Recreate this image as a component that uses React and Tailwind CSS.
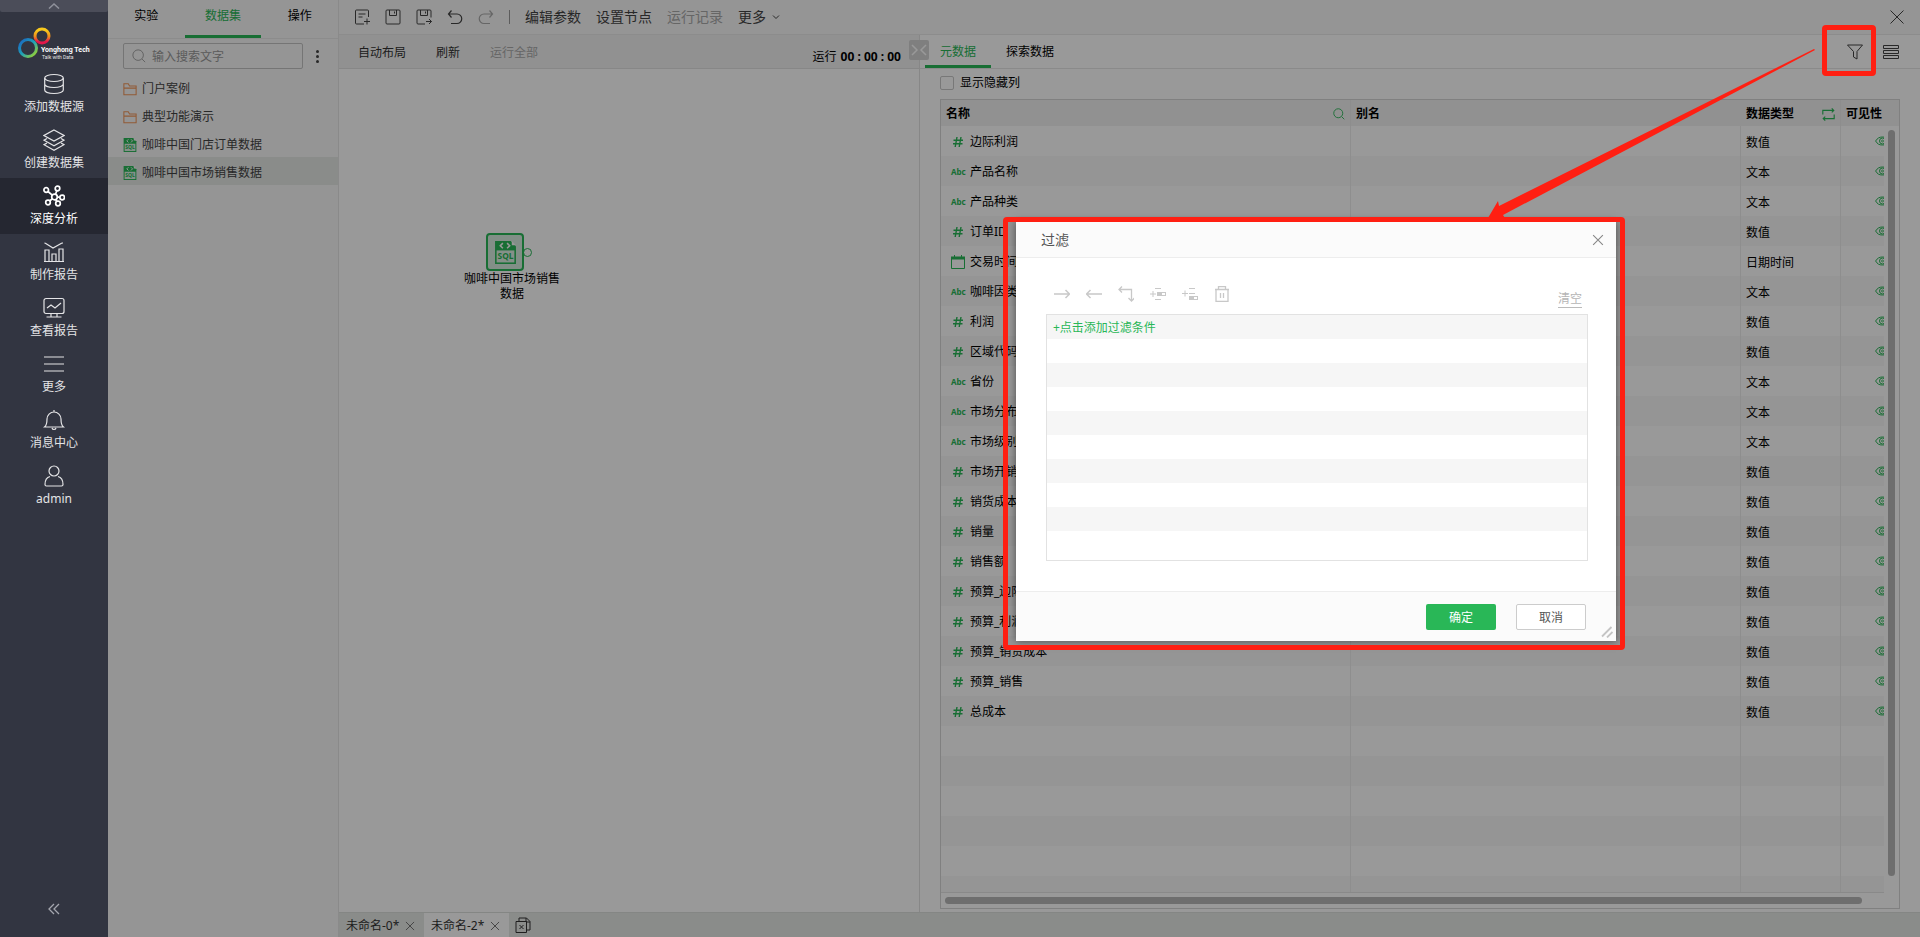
import React from "react";
import clsx from "clsx";

const menu = [
  { icon: "database", label: "添加数据源" },
  { icon: "layers", label: "创建数据集" },
  { icon: "nodes", label: "深度分析", active: true },
  { icon: "chart", label: "制作报告" },
  { icon: "monitor", label: "查看报告" },
  { icon: "menu", label: "更多" },
  { icon: "bell", label: "消息中心" },
  { icon: "user", label: "admin" },
];

const files = [
  { type: "folder", name: "门户案例" },
  { type: "folder", name: "典型功能演示" },
  { type: "sql", name: "咖啡中国门店订单数据" },
  { type: "sql", name: "咖啡中国市场销售数据", active: true },
];

const columns = [
  { name: "边际利润", type: "数值" },
  { name: "产品名称", type: "文本" },
  { name: "产品种类", type: "文本" },
  { name: "订单ID", type: "数值" },
  { name: "交易时间", type: "日期时间" },
  { name: "咖啡因类型", type: "文本" },
  { name: "利润", type: "数值" },
  { name: "区域代码", type: "数值" },
  { name: "省份", type: "文本" },
  { name: "市场分布", type: "文本" },
  { name: "市场级别", type: "文本" },
  { name: "市场开销", type: "数值" },
  { name: "销货成本", type: "数值" },
  { name: "销量", type: "数值" },
  { name: "销售额", type: "数值" },
  { name: "预算_边际利润", type: "数值" },
  { name: "预算_利润", type: "数值" },
  { name: "预算_销货成本", type: "数值" },
  { name: "预算_销售", type: "数值" },
  { name: "总成本", type: "数值" },
];

const emptyRows = [0, 1, 2, 3, 4, 5];
const filterRows = [0, 1, 2, 3, 4, 5, 6, 7, 8];

const menuIcons = {
  database: (
    <>
      <ellipse cx="11" cy="5" rx="9.3" ry="3.5" />
      <path d="M1.7 5v12c0 2 4 3.5 9.3 3.5s9.300-1.500 9.300-3.500V5M1.700 11c0 2 4 3.500 9.300 3.500s9.300-1.500 9.300-3.500" />
    </>
  ),
  layers: (
    <path d="M11 1l10 5.500-10 5.500L1 6.500zM4 9.500l-3 1.700 10 5.500 10-5.500-3-1.700M4 14l-3 1.700 10 5.500 10-5.500-3-1.700" />
  ),
  nodes: (
    <g strokeWidth="1.700">
      <circle cx="11.500" cy="12" r="2.800" />
      <circle cx="3.200" cy="5" r="2.300" />
      <circle cx="14.500" cy="3.500" r="2.300" />
      <circle cx="19.200" cy="12.500" r="2.300" />
      <circle cx="5" cy="17.500" r="2.300" />
      <circle cx="15" cy="18.500" r="2.300" />
      <path d="M5 6.500l4.500 3.800M13.800 5.800l-1.300 3.500M14.300 12.200h2.500M6.500 16l3-2.200M14 16.500l-1.300-2" />
    </g>
  ),
  chart: (
    <path d="M1 20.500h20M2 20V9h4v11M9 20v-7h4v7M16 20V8h4v12M2 2l8 5 9-5M2.500 2.200h-1M20 2h-1" />
  ),
  monitor: (
    <path d="M3 1.500h16a2 2 0 0 1 2 2v11a2 2 0 0 1-2 2H3a2 2 0 0 1-2-2v-11a2 2 0 0 1 2-2zM8 16.500v3.500M14 16.500v3.500M3.500 20h15M4 11l4-3 4 3 6-5" />
  ),
  menu: <path d="M1 4h20M1 11h20M1 18h20" />,
  bell: (
    <path d="M11 1v2M1.500 18c2-1.500 2.500-4 2.500-8a7 7 0 0 1 14 0c0 4 .500 6.500 2.500 8zM9 19c.500 2 3.500 2 4 0" />
  ),
  user: (
    <>
      <circle cx="11" cy="6" r="5" />
      <path d="M7 11.500c-3 .800-5 3.500-5 8 0 1 .500 1.500 1.500 1.500h15c1 0 1.500-.500 1.500-1.500 0-4.500-2-7.200-5-8" />
    </>
  ),
};

const Icon = ({ className, size = 16, viewBox = "0 0 16 16", width, children }) => (
  <svg
    className={clsx("shrink-0", className)}
    width={size}
    height={size}
    viewBox={viewBox}
    fill="none"
    stroke="currentColor"
    strokeWidth={width || 1}
  >
    {children}
  </svg>
);

const CloseIcon = ({ className, size = 16, width }) => (
  <Icon className={className} size={size} width={width}>
    <path d="M1.500 1.500l13 13M14.500 1.500l-13 13" />
  </Icon>
);

const FolderIcon = () => (
  <Icon size={14} className="text-[#f2965a]" width={1.2}>
    <path d="M1 14.500V2h5l1.500 2.500H15v10zM1 7h14" />
  </Icon>
);

const SqlIcon = ({ size = 14 }) => (
  <svg className="shrink-0" width={size} height={size} viewBox="0 0 20 22" fill="none">
    <path d="M0 0h15l5 5v17H0z" fill="#29b757" />
    <path d="M1.500 9h17v11.500h-17z" fill="#dff1e5" />
    <path d="M7.500 2L5 4.500 7.500 7M11.500 2L14 4.500 11.500 7" stroke="#fff" strokeWidth="1.500" />
    <path d="M16 0v4h4z" fill="#fff" />
    <text x="10" y="17.500" textAnchor="middle" fontSize="8" fontWeight="700" fill="#29b757">
      SQL
    </text>
  </svg>
);

const TypeIcon = ({ type }) => {
  if (type === "文本") return <span className="w-[14px] text-[8px] leading-3 font-bold text-[#29b757]">Abc</span>;
  if (type === "日期时间")
    return (
      <Icon size={14} className="text-[#29b757]" viewBox="0 0 14 14">
        <path d="M.5 2.500h13v11H.5z" />
        <path d="M0 1.500h14v3H0z" fill="currentColor" stroke="none" />
        <path d="M3.500 0v3M10.500 0v3" />
      </Icon>
    );
  return (
    <Icon size={14} className="text-[#29b757]" viewBox="0 0 14 14" width={1.4}>
      <path d="M6 2L4.200 12M10 2L8.200 12M2.500 5.200h9.500M2 8.800h9.500" />
    </Icon>
  );
};

const EyeIcon = () => (
  <svg className="shrink-0 text-[#29b757]" width="16" height="10" viewBox="0 0 16 10" fill="none" stroke="currentColor">
    <path d="M.6 5C2.500 2 4.500 1 7.500 1s5.500 1 7.400 4C13 8 11 9 7.500 9S2.500 8 .6 5z" />
    <circle cx="7.500" cy="5" r="3" />
    <circle cx="7.500" cy="5" r="1" strokeWidth=".8" />
  </svg>
);

const Logo = () => (
  <svg width="76" height="36" viewBox="0 0 76 36" fill="none">
    <defs>
      <linearGradient id="warm" x1="0" y1="0" x2="0" y2="1">
        <stop offset="0.1" stopColor="#f8c81c" />
        <stop offset="0.55" stopColor="#f08a1d" />
        <stop offset="0.9" stopColor="#e2174b" />
      </linearGradient>
      <linearGradient id="cool" x1="0" y1="0" x2="1" y2="1">
        <stop offset="0.1" stopColor="#1b6fc0" />
        <stop offset="0.5" stopColor="#1fa3b8" />
        <stop offset="0.9" stopColor="#8fce3c" />
      </linearGradient>
    </defs>
    <circle cx="25" cy="10" r="7" stroke="url(#warm)" strokeWidth="3" />
    <circle cx="11" cy="22" r="8.500" stroke="url(#cool)" strokeWidth="3" />
    <text x="24" y="26" fontSize="7" fontWeight="700" fill="#fff" fontFamily="Roboto, sans-serif">
      Yonghong Tech
    </text>
    <text x="25" y="33" fontSize="5" fill="#e5e5e5" fontFamily="Roboto, sans-serif">
      Talk with Data
    </text>
  </svg>
);

const Sidebar = () => (
  <aside className="flex w-[108px] shrink-0 flex-col bg-[#323541] text-[#e4e4e6]">
    <button className="flex h-3 items-center justify-center rounded-b-xs bg-[#4b4d59] text-[#8f919b]" aria-label="收起顶部">
      <svg width="12" height="6" viewBox="0 0 12 6" fill="none" stroke="currentColor" strokeWidth="1.500">
        <path d="M1 5.500l5-4.500 5 4.500" />
      </svg>
    </button>
    <div className="flex h-[54px] items-start pt-[14px] pl-[17px]">
      <Logo />
    </div>
    <nav className="flex flex-col">
      {menu.map((el) => (
        <a
          key={el.label}
          href="#"
          className={clsx(
            "flex h-14 flex-col items-center gap-1 pt-[7px] text-xs",
            el.active && "bg-[#252731] text-white"
          )}
        >
          <Icon size={22} viewBox="0 0 22 22" width={1.2}>
            {menuIcons[el.icon]}
          </Icon>
          <span>{el.label}</span>
        </a>
      ))}
    </nav>
    <button className="mt-auto mb-[22px] flex justify-center text-[#a4a6ae]" aria-label="收起菜单">
      <svg width="12" height="12" viewBox="0 0 12 12" fill="none" stroke="currentColor" strokeWidth="1.300">
        <path d="M6 1L1 6l5 5M11 1L6 6l5 5" />
      </svg>
    </button>
  </aside>
);

const DataPanel = () => (
  <section className="flex w-[231px] shrink-0 flex-col border-r border-[#e6e6e6] bg-[#f8f8f8] text-xs">
    <div className="flex h-[39px] border-b border-[#e9e9e9]">
      <button className="flex-1 border-b-3 border-transparent pb-[3px]">实验</button>
      <button className="flex-1 border-b-3 border-[#29b757] pb-[3px] text-[#29b757]">数据集</button>
      <button className="flex-1 border-b-3 border-transparent pb-[3px]">操作</button>
    </div>
    <div className="flex items-center gap-[11px] py-1 pr-[18px] pl-[15px]">
      <label className="flex h-[26px] min-w-0 flex-1 items-center gap-[6px] rounded-xs border border-[#c4c4c4] px-2">
        <Icon size={14} className="text-[#999]">
          <circle cx="7" cy="7" r="6" />
          <path d="M11.500 11.500l3.500 3.500" />
        </Icon>
        <input
          type="text"
          placeholder="输入搜索文字"
          aria-label="输入搜索文字"
          className="min-w-0 flex-1 pt-[2px] outline-none placeholder:text-[#999]"
        />
      </label>
      <button aria-label="更多操作" className="flex w-[6px] flex-col items-center gap-[2px]">
        <span className="size-[3px] rounded-full bg-[#444]" />
        <span className="size-[3px] rounded-full bg-[#444]" />
        <span className="size-[3px] rounded-full bg-[#444]" />
      </button>
    </div>
    <ul>
      {files.map((el) => (
        <li
          key={el.name}
          className={clsx("flex h-7 items-center gap-[5px] pt-[3px] pl-[15px] text-[#444]", el.active && "bg-[#e6e9e7]")}
        >
          {el.type === "folder" ? <FolderIcon /> : <SqlIcon />}
          <span>{el.name}</span>
        </li>
      ))}
    </ul>
  </section>
);

const TopBar = () => (
  <header className="flex h-[35px] shrink-0 items-center gap-[15px] border-b border-[#eaeaea] bg-[#f8f8f8] px-[15px] text-sm text-[#444]">
    <button aria-label="新建">
      <Icon>
        <path d="M14.500 8V2a1 1 0 0 0-1-1h-11a1 1 0 0 0-1 1v12a1 1 0 0 0 1 1H10M4.500 5h7M4.500 8h4M13 9.500v6M10 12.500h6" />
      </Icon>
    </button>
    <button aria-label="保存">
      <Icon>
        <path d="M2 1h12a1 1 0 0 1 1 1v12a1 1 0 0 1-1 1H2a1 1 0 0 1-1-1V2a1 1 0 0 1 1-1zM4.500 1v5.500h7V1M9.500 2.500v2" />
      </Icon>
    </button>
    <button aria-label="另存为">
      <Icon>
        <path d="M15 8.500V2a1 1 0 0 0-1-1H2a1 1 0 0 0-1 1v12a1 1 0 0 0 1 1h7M4.500 1v5.500h7V1M9.500 2.500v2M10 12.500h5.500M13 10l2.500 2.500L13 15" />
      </Icon>
    </button>
    <button aria-label="撤销">
      <Icon width={1.200}>
        <path d="M4.500 1.500L1.500 5l3 3.500M1.500 5h8.500a4.700 4.700 0 0 1 0 9.500H4" />
      </Icon>
    </button>
    <button aria-label="重做" className="text-[#aaa]">
      <Icon width={1.200}>
        <path d="M11.500 1.500l3 3.500-3 3.500M14.500 5H6a4.700 4.700 0 0 0 0 9.500h6" />
      </Icon>
    </button>
    <span className="h-[14px] w-px bg-[#999]" />
    <button>编辑参数</button>
    <button>设置节点</button>
    <button className="text-[#aaa]">运行记录</button>
    <button className="flex items-center gap-[6px]">
      更多
      <Icon size={8} viewBox="0 0 8 8">
        <path d="M1 2.500l3 3 3-3" />
      </Icon>
    </button>
    <button aria-label="关闭" className="ml-auto">
      <CloseIcon />
    </button>
  </header>
);

const Canvas = () => (
  <section className="relative flex w-[581px] shrink-0 flex-col border-r border-[#e2e2e2] bg-white text-xs">
    <div className="flex h-[34px] items-center gap-[30px] border-b border-[#e2e2e2] bg-[#f2f2f2] pt-[2px] pr-[18px] pl-[19px] text-[#333]">
      <button>自动布局</button>
      <button>刷新</button>
      <button className="text-[#aaa]">运行全部</button>
      <span className="ml-auto flex gap-1 pt-2 text-black">
        运行 <b>00 : 00 : 00</b>
      </span>
    </div>
    <div className="relative flex-1">
      <div className="absolute top-[164px] left-[121px] flex w-[104px] flex-col items-center">
        <div className="flex items-center pr-[6px]">
          <span className="flex size-[38px] items-center justify-center rounded-sm border-2 border-[#29b757] bg-[#d9efe1]">
            <SqlIcon size={23} />
          </span>
          <span className="-ml-px size-[9px] rounded-full border border-[#29b757]" />
        </div>
        <p className="text-center leading-[15px]">咖啡中国市场销售数据</p>
      </div>
    </div>
    <button
      aria-label="折叠面板"
      className="absolute top-[5px] -right-[10px] z-10 flex size-5 items-center justify-center rounded-xs bg-[#d4d4d4] text-white"
    >
      <Icon width={1.500}>
        <path d="M1 3l5 5-5 5M15 3l-5 5 5 5" />
      </Icon>
    </button>
  </section>
);

const MetaTable = () => (
  <div className="mr-5 ml-5 flex min-h-0 flex-1 flex-col border border-[#d6d6d6]">
    <div className="relative min-h-0 flex-1 overflow-hidden">
      <div className="absolute inset-0 overflow-hidden">
        <table className="w-full table-fixed border-separate border-spacing-0 text-left">
          <colgroup>
            <col className="w-[410px]" />
            <col />
            <col className="w-[100px]" />
            <col className="w-[43px]" />
            <col className="w-[15px]" />
          </colgroup>
          <thead>
            <tr className="h-[26px] bg-[#f2f2f2]">
              <th className="border-r border-[#ebebeb] px-[5px] pt-[2px] pb-0">
                <span className="flex items-center justify-between">
                  名称
                  <Icon size={12} className="text-[#29b757]" width={1.200}>
                    <circle cx="7" cy="7" r="6" />
                    <path d="M11.500 11.500l3.500 3.500" />
                  </Icon>
                </span>
              </th>
              <th className="px-[5px] pt-[2px] pb-0">别名</th>
              <th className="border-r border-[#ebebeb] px-[5px] pt-[2px] pb-0">
                <span className="flex items-center justify-between">
                  数据类型
                  <Icon size={13} className="text-[#29b757]" width={1.400}>
                    <path d="M1 8V3h13M12 .5L14.500 3 12 5.500M15 8v5H2M4 10.500L1.500 13 4 15.500" />
                  </Icon>
                </span>
              </th>
              <th colSpan={2} className="px-[5px] pt-[2px] pb-0">
                可见性
              </th>
            </tr>
          </thead>
          <tbody>
            {columns.map((el) => (
              <tr key={el.name} className="group h-[30px]">
                <td className="border-r border-[#ededed] px-0 pt-[2px] pb-0 group-even:bg-[#f8f8f8]">
                  <span className="flex items-center gap-[5px] pl-[10px]">
                    <TypeIcon type={el.type} />
                    {el.name}
                  </span>
                </td>
                <td className="border-r border-[#ededed] p-0 group-even:bg-[#f8f8f8]" />
                <td className="border-r border-[#ededed] px-[5px] pt-1 pb-0 group-even:bg-[#f8f8f8]">{el.type}</td>
                <td className="overflow-hidden py-0 pl-[34px] group-even:bg-[#f8f8f8]">
                  <div className="w-[9px] overflow-hidden">
                    <EyeIcon />
                  </div>
                </td>
                <td className="p-0" />
              </tr>
            ))}
            {emptyRows.map((el) => (
              <tr key={el} className="group h-[30px]">
                <td className="border-r border-[#ededed] group-even:bg-[#f8f8f8]" />
                <td className="border-r border-[#ededed] group-even:bg-[#f8f8f8]" />
                <td className="border-r border-[#ededed] group-even:bg-[#f8f8f8]" />
                <td className="group-even:bg-[#f8f8f8]" />
                <td />
              </tr>
            ))}
          </tbody>
        </table>
      </div>
      <div className="absolute top-[30px] right-1 bottom-4 w-[7px] rounded-full bg-[#b8b8b8]" />
    </div>
    <div className="mr-[15px] flex h-4 items-center border-t border-[#e4e4e4] pr-[22px] pl-1">
      <div className="h-[7px] flex-1 rounded-full bg-[#b8b8b8]" />
    </div>
  </div>
);

const MetaPanel = () => (
  <section className="flex min-w-0 flex-1 flex-col bg-white pb-[3px] text-xs">
    <div className="flex h-[34px] shrink-0 border-b border-[#e6e6e6] pr-[21px] pl-[5px]">
      <button className="border-b-3 border-[#29b757] px-[15px] pt-1 text-[#29b757]">元数据</button>
      <button className="border-b-3 border-transparent px-[15px] pt-1">探索数据</button>
      <div className="ml-auto flex items-center gap-5 text-[#444]">
        <button aria-label="过滤">
          <Icon>
            <path d="M.5 1h15L10 7.500V15l-3.500-2V7.500z" />
          </Icon>
        </button>
        <button aria-label="列表">
          <Icon>
            <path d="M.5 1.500h15v3H.5zM.5 6.500h15v3H.5zM.5 11.500h15v3H.5z" />
          </Icon>
        </button>
      </div>
    </div>
    <label className="flex h-[30px] shrink-0 items-center gap-[6px] pb-[2px] pl-5">
      <input type="checkbox" className="size-[14px] appearance-none rounded-xs border border-[#c8c8c8]" />
      显示隐藏列
    </label>
    <MetaTable />
  </section>
);

const BottomTabs = () => (
  <footer className="flex h-[25px] shrink-0 border-t border-[#dcdfdd] bg-[#e6e9e7] text-xs text-[#333]">
    {["未命名-0*", "未命名-2*"].map((name, i) => (
      <div
        key={name}
        className={clsx("flex w-[85px] items-center justify-between pt-[2px] pr-[9px] pl-[7px]", i === 1 && "bg-white")}
      >
        <button>{name}</button>
        <button aria-label={"关闭 " + name} className="text-[#777]">
          <CloseIcon size={10} width={1.6} />
        </button>
      </div>
    ))}
    <button aria-label="新建标签" className="ml-[6px]">
      <Icon>
        <path d="M1 4.500h10.500v11H1zM4 4.500V1h7.500l3.500 3.500V13h-3.500M11 1v4h4M4.500 8l4 4M8.500 8l-4 4" />
      </Icon>
    </button>
  </footer>
);

const FilterDialog = () => (
  <div
    role="dialog"
    aria-label="过滤"
    className="absolute top-[222px] right-[304px] flex w-[600px] flex-col bg-white text-xs shadow-[0_0_8px_rgba(0,0,0,0.5)]"
  >
    <div className="flex h-9 items-center justify-between border-b border-[#ededed] bg-[#fbfbfb] pr-3 pl-[25px] text-sm text-[#555]">
      <h2>过滤</h2>
      <button aria-label="关闭对话框" className="text-[#888]">
        <CloseIcon size={12} width={1.5} />
      </button>
    </div>
    <div className="flex flex-col pr-7 pb-[30px] pl-[30px]">
      <div className="flex h-14 items-end justify-between pr-[6px] pb-3 pl-2 text-[#c8c8c8]">
        <div className="flex gap-4">
          <button aria-label="右移">
            <Icon width={1.500}>
              <path d="M0 8h15.500M11.500 4l4 4-4 4" />
            </Icon>
          </button>
          <button aria-label="左移">
            <Icon width={1.500}>
              <path d="M16 8H.5M4.500 4L.5 8l4 4" />
            </Icon>
          </button>
          <button aria-label="下移">
            <Icon width={1.300}>
              <path d="M4 .5L1 3.500l3 3M1 3.500h12.500V15M10.500 12l3 3 3-3" />
            </Icon>
          </button>
          <button aria-label="插入条件">
            <Icon>
              <path d="M5 2.500h6M5 13.500h6M0 8h6M3 5v6" />
              <path d="M7 6h9v4H7z" fill="currentColor" stroke="none" />
              <path d="M12 7h3v2h-3z" fill="#fff" stroke="none" />
            </Icon>
          </button>
          <button aria-label="追加条件">
            <Icon>
              <path d="M7 2.500h6M7 7.500h6M0 7.500h6M3 4.500v6" />
              <path d="M7 10h9v4H7z" fill="currentColor" stroke="none" />
              <path d="M12 11h3v2h-3z" fill="#fff" stroke="none" />
            </Icon>
          </button>
          <button aria-label="删除">
            <Icon width={1.300}>
              <path d="M1 3.500h14M4.500 3V.7h7V3M2 3.500v11.800h12V3.500M6.500 7v5M9.500 7v5" />
            </Icon>
          </button>
        </div>
        <button className="-mb-[6px] border-b border-[#bbb] text-[#b5b5b5]">清空</button>
      </div>
      <div className="border border-[#e2e2e2] pb-[5px]">
        <div className="flex h-6 items-center bg-[#f6f6f6] pt-[2px] pl-[6px]">
          <button className="text-[#29b757]">+点击添加过滤条件</button>
        </div>
        {filterRows.map((row) => (
          <div key={row} className="h-6 even:bg-white odd:bg-[#f6f6f6]" />
        ))}
      </div>
    </div>
    <div className="flex h-[50px] justify-end gap-5 border-t border-[#ededed] bg-[#fbfbfb] pt-3 pr-[30px]">
      <button className="h-[26px] w-[70px] rounded-xs bg-[#29b757] pt-[2px] text-white">确定</button>
      <button className="h-[26px] w-[70px] rounded-xs border border-[#ccc] bg-white pt-[2px] text-[#555]">取消</button>
    </div>
    <Icon size={12} viewBox="0 0 12 12" width={1.8} className="absolute right-[3px] bottom-[3px] text-[#c4c4c4]">
      <path d="M1 10.500L10.500 1M6 11.500L11.500 6" />
    </Icon>
  </div>
);

// callouts pointing from the filter button to the dialog
const Callouts = () => (
  <div className="pointer-events-none text-[#ff1f12]">
    <div className="absolute top-[25px] right-[44px] h-[51px] w-[54px] rounded-sm border-5 border-current" />
    <div className="absolute top-[217px] right-[295px] h-[433px] w-[622px] rounded-sm border-5 border-current" />
    <svg className="absolute top-10 right-[100px]" width="340" height="180" viewBox="0 0 340 180" fill="currentColor">
      <path d="M334 9L19 166l-1-5-10 17v2h18l-3-5L335 10z" />
    </svg>
  </div>
);

const App = () => {
  return (
    <div className="relative flex h-screen overflow-hidden font-['Noto_Sans','Noto_Sans_CJK_SC',sans-serif] text-black">
      <Sidebar />
      <main className="relative flex min-w-0 flex-1">
        <DataPanel />
        <div className="flex min-w-0 flex-1 flex-col">
          <TopBar />
          <div className="flex min-h-0 flex-1">
            <Canvas />
            <MetaPanel />
          </div>
          <BottomTabs />
        </div>
        <div className="absolute inset-0 z-20 bg-black/40" />
      </main>
      <div className="absolute inset-0 z-30">
        <FilterDialog />
        <Callouts />
      </div>
    </div>
  );
};

export default App;
